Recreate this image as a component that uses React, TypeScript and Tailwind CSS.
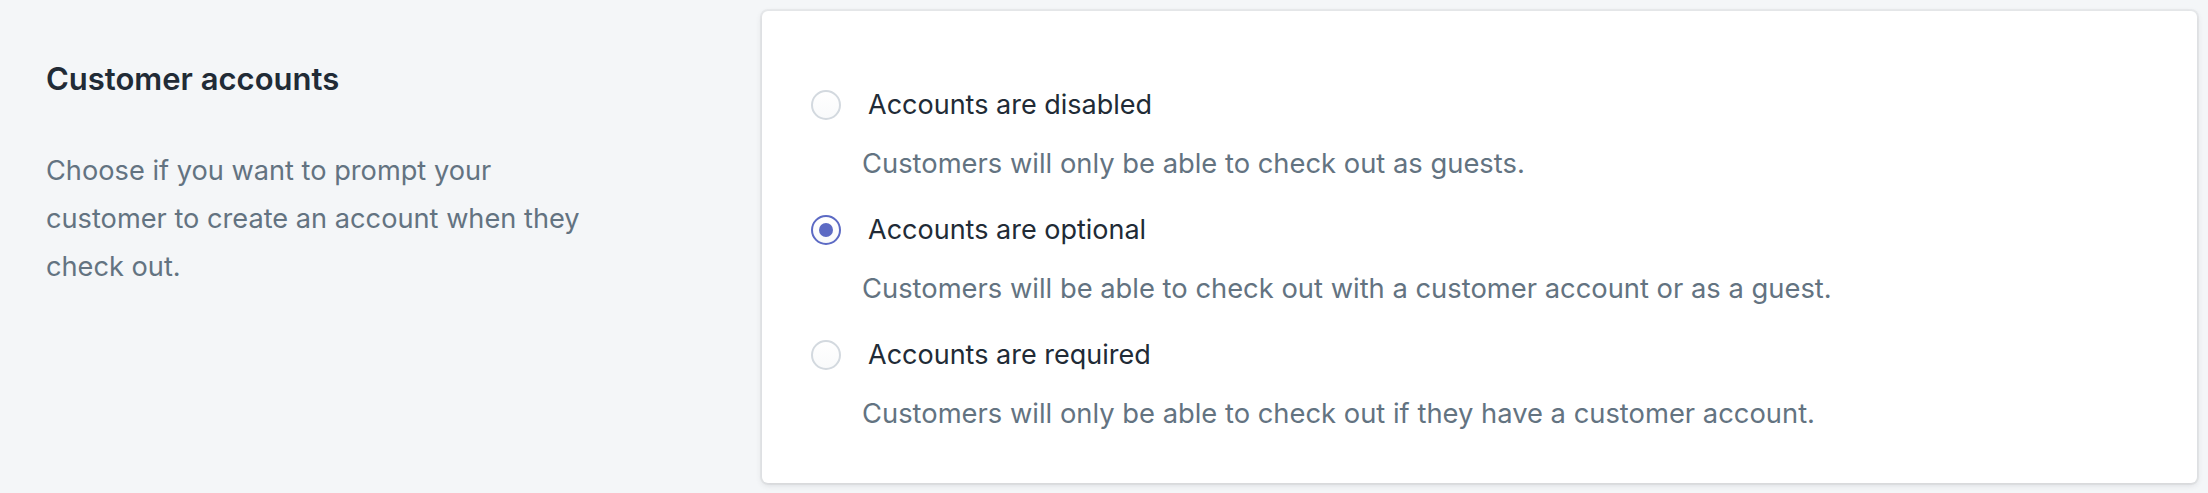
const options = [
  {
    label: "Accounts are disabled",
    help: "Customers will only be able to check out as guests.",
    checked: false,
  },
  {
    label: "Accounts are optional",
    help: "Customers will be able to check out with a customer account or as a guest.",
    checked: true,
  },
  {
    label: "Accounts are required",
    help: "Customers will only be able to check out if they have a customer account.",
    checked: false,
  },
]

function Radio({ checked }: { checked: boolean }) {
  return (
    <span
      className={`flex h-[30px] w-[30px] shrink-0 items-center justify-center rounded-full border-2 bg-gradient-to-b from-white to-[#f9fafb] ${
        checked ? "border-[#5c6ac4]" : "border-[#d3d9df]"
      }`}
    >
      {checked && <span className="h-[14px] w-[14px] rounded-full bg-[#5c6ac4]" />}
    </span>
  )
}

export default function App() {
  return (
    <div className="flex h-[493px] w-full bg-[#f4f6f8] font-['Inter',sans-serif]">
      {/* Annotation */}
      <div className="w-[762px] shrink-0 pl-[46px] pt-[59px]">
        <h2 className="text-[31px] font-semibold leading-[40px] text-[#212b36]">Customer accounts</h2>
        <p className="mt-[48px] max-w-[560px] text-[27.2px] leading-[48px] text-[#637381]">
          Choose if you want to prompt your customer to create an account when they check out.
        </p>
      </div>

      {/* Card */}
      <div className="mb-[10px] mr-[11px] mt-[11px] flex-1 rounded-[6px] bg-white pb-[44px] pl-[49px] pt-[70px] shadow-[0_0_0_2px_rgba(63,63,68,0.05),0_2px_6px_0_rgba(63,63,68,0.15)]">
        <ul className="flex flex-col gap-[18px]">
          {options.map((option) => (
            <li key={option.label}>
              <label className="flex h-[48px] items-center">
                <Radio checked={option.checked} />
                <span className="ml-[27px] text-[27px] leading-[48px] text-[#212b36]">{option.label}</span>
              </label>
              <div className="mt-[11px] pl-[51px] text-[27.35px] leading-[48px] text-[#637381]">{option.help}</div>
            </li>
          ))}
        </ul>
      </div>
    </div>
  )
}
